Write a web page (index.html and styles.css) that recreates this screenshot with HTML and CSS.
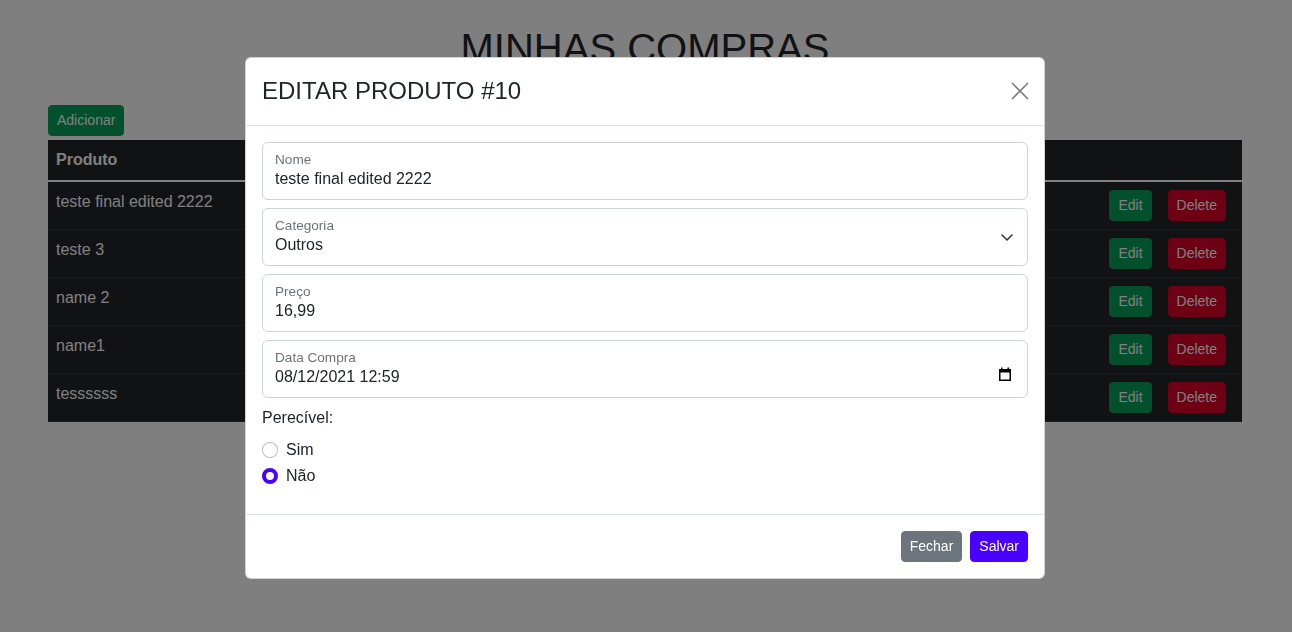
FILE: index.html
```html
<!DOCTYPE html>
<html lang="pt-BR">
<head>
<meta charset="utf-8">
<title>Minhas Compras</title>
<link rel="stylesheet" href="styles.css">
</head>
<body>
<div class="page">
  <h1 class="page-title">MINHAS COMPRAS</h1>
  <div class="toolbar">
    <button class="btn btn-success">Adicionar</button>
  </div>
  <table class="table">
    <colgroup>
      <col class="col-produto">
      <col class="col-acoes">
    </colgroup>
    <thead>
      <tr><th>Produto</th><th></th></tr>
    </thead>
    <tbody>
      <tr><td>teste final edited 2222</td><td><div class="actions"><button class="btn btn-success">Edit</button><button class="btn btn-danger">Delete</button></div></td></tr>
      <tr><td>teste 3</td><td><div class="actions"><button class="btn btn-success">Edit</button><button class="btn btn-danger">Delete</button></div></td></tr>
      <tr><td>name 2</td><td><div class="actions"><button class="btn btn-success">Edit</button><button class="btn btn-danger">Delete</button></div></td></tr>
      <tr><td>name1</td><td><div class="actions"><button class="btn btn-success">Edit</button><button class="btn btn-danger">Delete</button></div></td></tr>
      <tr><td>tessssss</td><td><div class="actions"><button class="btn btn-success">Edit</button><button class="btn btn-danger">Delete</button></div></td></tr>
    </tbody>
  </table>
</div>

<div class="backdrop"></div>

<div class="modal">
  <div class="modal-dialog">
    <div class="modal-header">
      <h5 class="modal-title">EDITAR PRODUTO #10</h5>
      <button class="btn-close" aria-label="Close">
        <svg width="18" height="18" viewBox="0 0 18 18"><path d="M1 1 17 17 M17 1 1 17" stroke="#000" stroke-width="1.6" fill="none"/></svg>
      </button>
    </div>
    <div class="modal-body">
      <div class="field">
        <div class="field-text">
          <span class="field-label">Nome</span>
          <span class="field-value">teste final edited 2222</span>
        </div>
      </div>
      <div class="field">
        <div class="field-text">
          <span class="field-label">Categoria</span>
          <span class="field-value">Outros</span>
        </div>
        <svg class="chevron" width="12" height="7" viewBox="0 0 12 7"><polyline points="1,1 6,6 11,1" fill="none" stroke="#343a40" stroke-width="1.6" stroke-linecap="round" stroke-linejoin="round"/></svg>
      </div>
      <div class="field">
        <div class="field-text">
          <span class="field-label">Preço</span>
          <span class="field-value">16,99</span>
        </div>
      </div>
      <div class="field">
        <div class="field-text">
          <span class="field-label">Data Compra</span>
          <span class="field-value">08/12/2021 12:59</span>
        </div>
        <svg class="calendar" width="14" height="15" viewBox="0 0 14 15"><rect x="1.75" y="2.75" width="10.5" height="10.5" fill="none" stroke="#000" stroke-width="1.5"/><rect x="1" y="2" width="12" height="3.5" fill="#000"/><rect x="3" y="0.5" width="1.5" height="2" fill="#000"/><rect x="9.5" y="0.5" width="1.5" height="2" fill="#000"/></svg>
      </div>
      <div class="group-label">Perecível:</div>
      <label class="radio"><input type="radio" name="perecivel" class="radio-input"><span>Sim</span></label>
      <label class="radio"><input type="radio" name="perecivel" class="radio-input" checked><span>Não</span></label>
    </div>
    <div class="modal-footer">
      <button class="btn btn-secondary">Fechar</button>
      <button class="btn btn-primary">Salvar</button>
    </div>
  </div>
</div>
</body>
</html>
```

FILE: styles.css
```css
* { box-sizing: border-box; }

body {
  margin: 0;
  font-family: "Liberation Sans", Arial, sans-serif;
  font-size: 16px;
  line-height: 1.5;
  color: #212529;
  background: #fff;
}

.page {
  padding: 24px 50px 24px 48px;
}

.page-title {
  margin: 0 0 33px;
  text-align: center;
  font-size: 40px;
  line-height: 48px;
  font-weight: 400;
}

.toolbar {
  display: flex;
  margin-bottom: 4px;
}

.btn {
  font-family: inherit;
  font-size: 14px;
  line-height: 21px;
  padding: 4px 8px;
  border: 1px solid transparent;
  border-radius: 4px;
  color: #fff;
  cursor: pointer;
}

.btn-success { background: #05a05a; border-color: #05a05a; }
.btn-danger { background: #dc002c; border-color: #dc002c; }
.btn-secondary { background: #6c757d; border-color: #6c757d; }
.btn-primary { background: #4a00ff; border-color: #4a00ff; }

.table {
  width: 100%;
  table-layout: fixed;
  border-collapse: separate;
  border-spacing: 0;
  background: #212529;
  color: #fff;
}

.col-acoes { width: 198px; }

.table th,
.table td {
  padding: 8px;
  text-align: left;
  vertical-align: top;
  border-bottom: 1px solid #373b3e;
  white-space: nowrap;
  overflow: hidden;
}

.table th {
  font-weight: 700;
  border-bottom: 2px solid #fff;
}

.table td:last-child {
  padding-right: 16px;
}

.actions {
  display: flex;
  justify-content: flex-end;
  gap: 16px;
}

.backdrop {
  position: fixed;
  inset: 0;
  background: rgba(0, 0, 0, 0.5);
}

.modal {
  position: fixed;
  inset: 0;
  display: flex;
  justify-content: center;
  align-items: flex-start;
  padding: 57px 2px 0 0;
}

.modal-dialog {
  width: 800px;
  background: #fff;
  border: 1px solid rgba(0, 0, 0, 0.175);
  border-radius: 6px;
}

.modal-header {
  display: flex;
  align-items: center;
  justify-content: space-between;
  padding: 15px 16px 16px;
  border-bottom: 1px solid #dee2e6;
}

.modal-title {
  margin: 0;
  font-size: 24px;
  line-height: 36px;
  font-weight: 400;
}

.btn-close {
  display: flex;
  padding: 0;
  margin-right: -1px;
  border: 0;
  background: transparent;
  opacity: 0.5;
  cursor: pointer;
}

.modal-body {
  padding: 16px 16px 24px;
}

.field {
  display: flex;
  align-items: center;
  height: 58px;
  padding: 10px 12px 10px;
  margin-bottom: 8px;
  border: 1px solid #ced4da;
  border-radius: 6px;
}

.field-text {
  flex: 1;
  display: flex;
  flex-direction: column;
}

.field-label {
  font-size: 13.6px;
  line-height: 14px;
  color: rgba(33, 37, 41, 0.65);
}

.field-value {
  font-size: 16px;
  line-height: 21px;
  padding-top: 1px;
  color: #212529;
}

.chevron {
  margin-right: 2px;
}

.calendar {
  margin-right: 3px;
  margin-top: 10px;
}

.group-label {
  margin-bottom: 8px;
}

.radio {
  display: flex;
  align-items: center;
  gap: 8px;
  margin-bottom: 2px;
}

.radio-input {
  appearance: none;
  -webkit-appearance: none;
  margin: 0;
  width: 16px;
  height: 16px;
  border-radius: 50%;
  border: 1px solid rgba(0, 0, 0, 0.25);
  background: #fff;
}

.radio-input:checked {
  border: 4px solid #4a00ff;
  background: #fff;
}

.modal-footer {
  display: flex;
  justify-content: flex-end;
  gap: 8px;
  padding: 16px;
  border-top: 1px solid #dee2e6;
}
```
